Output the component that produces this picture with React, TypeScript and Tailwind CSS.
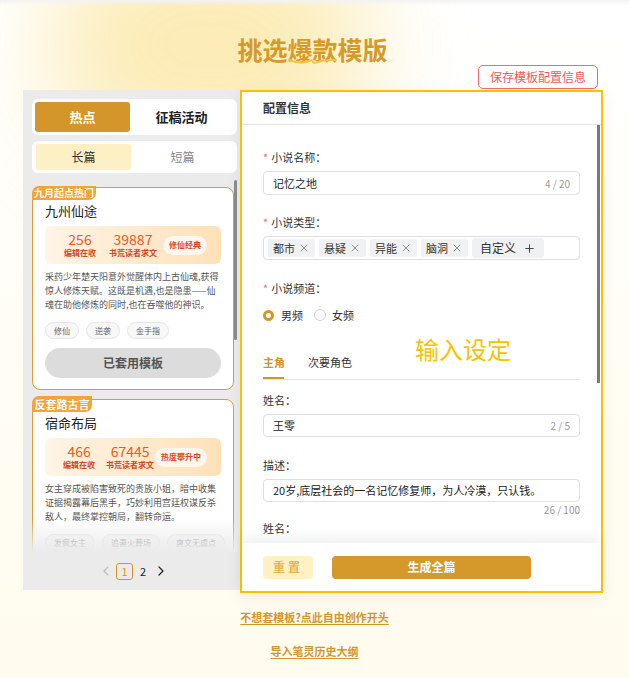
import React from 'react';
import { X, Plus, ChevronLeft, ChevronRight } from 'lucide-react';

type Card = {
  badge: string;
  big?: boolean;
  title: string;
  a: string;
  b: string;
  pill: string;
  desc: string;
  tags: string[];
};

const cards: Card[] = [
  {
    badge: '九月起点热门',
    title: '九州仙途',
    a: '256',
    b: '39887',
    pill: '修仙经典',
    desc: '采药少年楚天阳意外觉醒体内上古仙魂,获得惊人修炼天赋。这既是机遇,也是隐患——仙魂在助他修炼的同时,也在吞噬他的神识。',
    tags: ['修仙', '逆袭', '金手指'],
  },
  {
    badge: '反套路古言',
    big: true,
    title: '宿命布局',
    a: '466',
    b: '67445',
    pill: '热度攀升中',
    desc: '女主穿成被陷害致死的贵族小姐，暗中收集证据揭露幕后黑手，巧妙利用宫廷权谋反杀敌人，最终掌控朝局，翻转命运。',
    tags: ['发疯女主', '追妻火葬场', '爽文无虐点'],
  },
];

const genres = ['都市', '悬疑', '异能', '脑洞'];

function TemplateCard({ card, used }: { card: Card; used?: boolean }) {
  return (
    <div className="relative w-[202px] rounded-[8px] border border-[#e29a36] bg-white px-[12px] pt-[14px] pb-[11px]">
      {card.big ? (
        <div className="absolute left-[-1px] top-[-4px] h-[16px] w-[60px] whitespace-nowrap rounded-tl-[7px] rounded-br-[7px] bg-[#f6a235] text-center text-[11px] font-bold leading-[16px] text-white">
          {card.badge}
        </div>
      ) : (
        <div className="absolute left-[-1px] top-[-2px] h-[14px] whitespace-nowrap rounded-tl-[7px] rounded-br-[7px] bg-[#f6a235] px-[2px] text-[10px] font-bold leading-[14px] text-white">
          {card.badge}
        </div>
      )}
      <div className="text-[13px] leading-[18px] text-[#222]">{card.title}</div>
      <div className="mt-[6px] flex h-[38px] items-center rounded-[6px] bg-gradient-to-r from-[#fff4e6] to-[#ffe1b8] pl-[12px] pr-[10px]">
        <div className="flex w-[46px] flex-col items-center">
          <span className="text-[14px] leading-[14px] text-[#ec5a1c]">{card.a}</span>
          <span className="mt-[2px] whitespace-nowrap text-[8px] font-bold leading-[10px] text-[#d9461c]">编辑在收</span>
        </div>
        <div className="ml-[4px] flex w-[52px] flex-col items-center">
          <span className="text-[14px] leading-[14px] text-[#ec5a1c]">{card.b}</span>
          <span className="mt-[2px] whitespace-nowrap text-[8px] font-bold leading-[10px] text-[#d9461c]">书荒读者求文</span>
        </div>
        <div className="ml-auto mr-[4px] flex h-[19px] shrink-0 items-center whitespace-nowrap rounded-full bg-[#fff7ee] px-[6px] text-[8px] font-bold text-[#e2471b]">
          {card.pill}
        </div>
      </div>
      <p className="mt-[6px] text-[9px] leading-[14px] text-[#555]">{card.desc}</p>
      <div className="mt-[10px] flex gap-[7px]">
        {card.tags.map((t) => (
          <span
            key={t}
            className="flex h-[17px] shrink-0 items-center whitespace-nowrap rounded-full border border-[#e6e6e6] bg-[#f8f8f8] px-[8px] text-[8px] text-[#666]"
          >
            {t}
          </span>
        ))}
      </div>
      {used && (
        <div className="mt-[9px] flex h-[30px] items-center justify-center rounded-full bg-[#dcdcdc] text-[12px] font-bold text-[#555]">
          已套用模板
        </div>
      )}
    </div>
  );
}

function Label({ text, required }: { text: string; required?: boolean }) {
  return (
    <div className="flex h-[16px] items-center text-[11px] leading-[16px] text-[#333]">
      {required && <span className="mr-[3px] text-[#f56c6c]">*</span>}
      {text}：
    </div>
  );
}

export default function App() {
  return (
    <div className="relative h-[678px] w-full overflow-hidden bg-gradient-to-b from-white via-[#fffdf5] to-[#fffbee] font-['Noto_Sans_CJK_SC',sans-serif]">
      <div className="absolute left-[50px] top-[-70px] h-[230px] w-[320px] rounded-full bg-[#fbe7a4] opacity-80 blur-[50px]" />
      <div className="absolute left-0 top-0 h-[6px] w-full bg-gradient-to-b from-[#f3f3f3] to-transparent" />

      <div className="relative">
        <div className="h-[65px] pt-[33px] pr-[4px] text-center text-[25px] font-bold leading-[32px] text-[#d69a2c]">
          挑选
          <span className="relative">
            爆款
            <svg className="absolute left-0 top-[26px] h-[8px] w-[50px]" viewBox="0 0 50 8">
              <path
                d="M2 3 C10 6 18 6 22 4 C24 3 26 3 26 5 C27 7 30 5 34 4 C40 3 45 3 48 3"
                fill="none"
                stroke="#f3c64a"
                strokeWidth="2"
                strokeLinecap="round"
              />
            </svg>
          </span>
          模版
        </div>
        <div className="flex h-[25px] justify-end pr-[31px]">
          <button className="h-[24px] rounded-[5px] border border-[#f56c6c] bg-white px-[11px] text-[12px] text-[#f25a5a]">
            保存模板配置信息
          </button>
        </div>

        <div className="ml-[23px] flex h-[503px]">
          {/* left column */}
          <div className="flex h-[500px] w-[217px] flex-col bg-[#ebebeb] pl-[9px] pr-[3px] pt-[9px]">
            <div className="flex h-[36px] rounded-[6px] bg-white p-[3px] pr-[4px]">
              <div className="flex w-[95px] items-center justify-center rounded-[3px] bg-[#d4962a] text-[13px] font-bold text-white">
                热点
              </div>
              <div className="flex flex-1 items-center justify-center text-[13px] font-bold text-[#222]">征稿活动</div>
            </div>
            <div className="mt-[6px] flex h-[32px] rounded-[6px] bg-white p-[3px] pl-[4px]">
              <div className="flex w-[95px] items-center justify-center rounded-[3px] bg-[#fdf0c5] text-[12px] text-[#333]">
                长篇
              </div>
              <div className="flex flex-1 items-center justify-center text-[12px] text-[#888]">短篇</div>
            </div>
            <div className="relative mt-[7px] h-[372px] w-[205px] overflow-hidden">
              <div className="flex flex-col gap-[9px] pt-[7px]">
                <TemplateCard card={cards[0]} used />
                <TemplateCard card={cards[1]} />
              </div>
              <div className="absolute bottom-0 left-0 h-[34px] w-full bg-gradient-to-b from-transparent to-[#ebebeb]" />
              <div className="absolute right-0 top-0 h-[160px] w-[3px] rounded-full bg-[#8a8a8a]" />
            </div>
            <div className="flex h-[38px] items-center justify-center gap-[2px] pr-[2px]">
              <ChevronLeft className="h-[16px] w-[16px] text-[#bbb]" strokeWidth={1.6} />
              <span className="flex h-[17px] w-[17px] items-center justify-center rounded-[3px] border border-[#d4962a] text-[11px] text-[#d4962a]">
                1
              </span>
              <span className="w-[16px] text-center text-[11px] text-[#222]">2</span>
              <ChevronRight className="h-[16px] w-[16px] text-[#222]" strokeWidth={1.8} />
            </div>
          </div>

          {/* right column */}
          <div className="flex h-[503px] w-[363px] flex-col border-2 border-[#fbc100] bg-white shadow-[0_4px_16px_rgba(0,0,0,0.06)]">
            <div className="flex h-[33px] shrink-0 items-center border-b border-[#e4e4e4] pl-[21px] text-[12px] font-bold text-[#333]">
              配置信息
            </div>
            <div className="relative flex-1 overflow-hidden pl-[21px] pr-[21px] pt-[24px]">
              <div className="absolute right-[1px] top-0 h-[258px] w-[3px] bg-[#7a7a7a]" />
              <div className="pointer-events-none absolute left-[173px] top-[209px] text-[24px] leading-[30px] text-[#fbc100]">
                输入设定
              </div>

              <Label text="小说名称" required />
              <div className="mt-[6px] flex h-[24px] items-center justify-between rounded-[4px] border border-[#dcdfe6] px-[9px] text-[11px]">
                <span className="text-[#222]">记忆之地</span>
                <span className="text-[10px] text-[#999]">4 / 20</span>
              </div>

              <div className="mt-[19px]">
                <Label text="小说类型" required />
              </div>
              <div className="mt-[6px] flex h-[24px] items-center gap-[4px] rounded-[4px] border border-[#dcdfe6] pl-[4px]">
                {genres.map((g) => (
                  <span
                    key={g}
                    className="flex h-[18px] items-center gap-[3px] rounded-[3px] bg-[#f0f1f3] px-[5px] text-[11px] text-[#333]"
                  >
                    {g}
                    <X className="h-[12px] w-[12px] text-[#666]" strokeWidth={1.4} />
                  </span>
                ))}
                <span className="flex h-[20px] items-center gap-[7px] rounded-[3px] bg-[#f0f1f3] px-[8px] text-[12px] text-[#333]">
                  自定义
                  <Plus className="h-[13px] w-[13px] text-[#333]" strokeWidth={1.6} />
                </span>
              </div>

              <div className="mt-[20px]">
                <Label text="小说频道" required />
              </div>
              <div className="mt-[11px] flex h-[16px] items-center text-[11px] text-[#333]">
                <span className="h-[11px] w-[11px] rounded-full border-[3px] border-[#d4962a] bg-white" />
                <span className="ml-[7px]">男频</span>
                <span className="ml-[11px] h-[12px] w-[12px] rounded-full border border-[#d0d0d0] bg-white" />
                <span className="ml-[6px]">女频</span>
              </div>

              <div className="mt-[30px] flex h-[27px] border-b border-[#e6e6e6] text-[11px] leading-[16px]">
                <div className="flex flex-col">
                  <span className="pt-[1px] font-bold text-[#d4962a]">主角</span>
                  <span className="mt-auto h-[2px] w-[21px] bg-[#d4962a]" />
                </div>
                <span className="ml-[23px] pt-[1px] text-[#333]">次要角色</span>
              </div>

              <div className="mt-[12px]">
                <Label text="姓名" />
              </div>
              <div className="mt-[6px] flex h-[23px] items-center justify-between rounded-[4px] border border-[#dcdfe6] px-[9px] text-[11px]">
                <span className="text-[#222]">王零</span>
                <span className="text-[10px] text-[#999]">2 / 5</span>
              </div>

              <div className="mt-[20px]">
                <Label text="描述" />
              </div>
              <div className="mt-[6px] flex h-[23px] items-center rounded-[4px] border border-[#dcdfe6] px-[9px] text-[11px] text-[#222]">
                20岁,底层社会的一名记忆修复师，为人冷漠，只认钱。
              </div>
              <div className="mt-[1px] text-right text-[10px] leading-[14px] text-[#999]">26 / 100</div>

              <div className="mt-[3px]">
                <Label text="姓名" />
              </div>
            </div>
            <div className="flex h-[48px] shrink-0 items-center bg-white pl-[21px] shadow-[0_-6px_10px_rgba(40,70,90,0.07)]">
              <button className="h-[23px] w-[50px] rounded-[4px] bg-[#fff1c4] text-[12px] font-bold tracking-[3px] text-[#e6b54a]">
                重置
              </button>
              <button className="ml-[19px] h-[23px] w-[199px] rounded-[4px] bg-[#d4982b] text-[12px] font-bold text-white">
                生成全篇
              </button>
            </div>
          </div>
        </div>

        <div className="mt-[16px] text-center text-[11px] font-bold leading-[16px] text-[#d4962a] underline underline-offset-2">
          不想套模板?点此自由创作开头
        </div>
        <div className="mt-[18px] text-center text-[11px] font-bold leading-[16px] text-[#d4962a] underline underline-offset-2">
          导入笔灵历史大纲
        </div>
      </div>
    </div>
  );
}
